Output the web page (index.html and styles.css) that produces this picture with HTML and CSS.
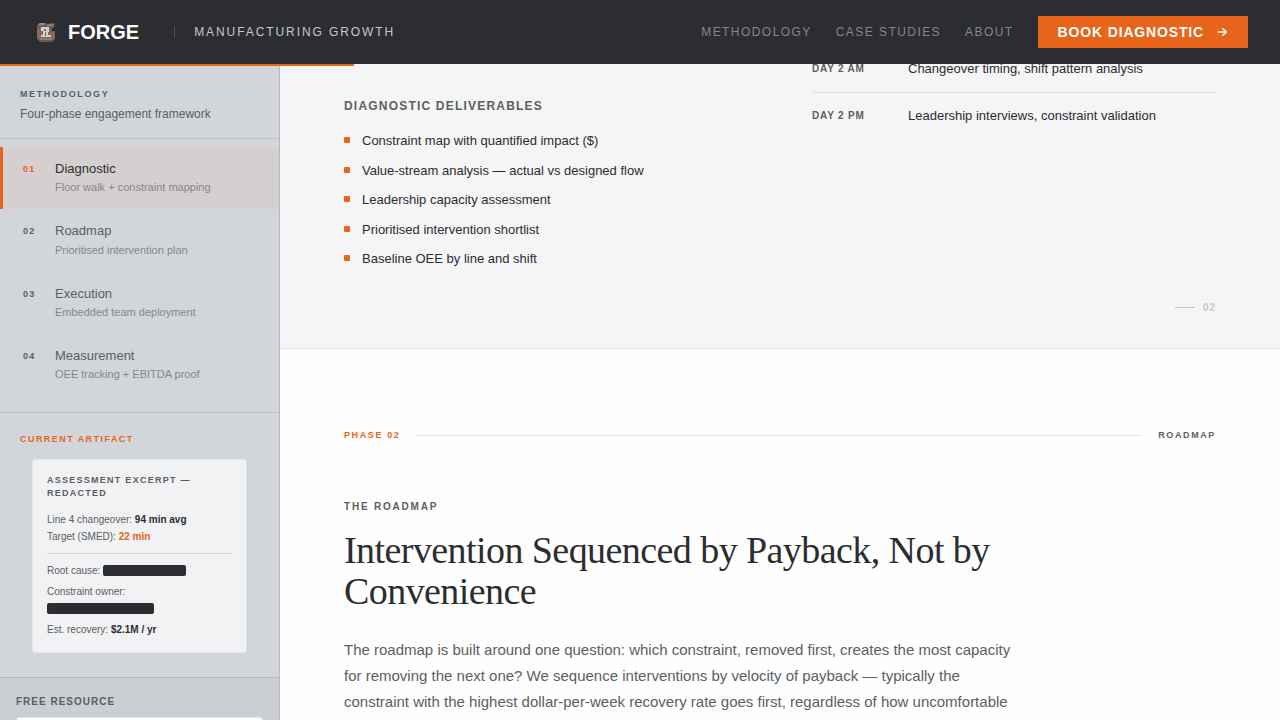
FILE: index.html
```html
<!DOCTYPE html>
<html lang="en">
<head>
  <meta charset="UTF-8" />
  <meta name="viewport" content="width=device-width, initial-scale=1.0" />
  <title>Forge | Manufacturing Growth</title>
  <link rel="stylesheet" href="styles.css">
</head>
<body>
  <header class="topbar">
    <a class="brand" href="#">
      <svg class="brand-logo" width="20" height="20" viewBox="0 0 20 20" aria-hidden="true">
        <path d="M3 1h5l3 1 8-1-1 5h-2v3h3v8l-3 3H4l-3-3V4z" fill="#6b5a54"/>
        <path d="M1 7h13v3h5v6H1z" fill="#86685d"/>
        <path d="M1 4 4 1h6l-2 2H4zM11 3l7-1-2 2h-5z" fill="#978c87"/>
        <path d="M2 16h16l-2 2H4z" fill="#857e7a"/>
        <path d="M5 5h8v5h-1v3h3v2H5v-2h2V9H5z" fill="#d6d0cc"/>
        <path d="M8 7h2v2H8zM9 10h1v4H9z" fill="#75645e"/>
      </svg>
      <span class="brand-name">FORGE</span>
    </a>
    <span class="brand-divider"></span>
    <span class="brand-tag">MANUFACTURING GROWTH</span>
    <nav class="topnav">
      <a href="#methodology">METHODOLOGY</a>
      <a href="#cases">CASE STUDIES</a>
      <a href="#about">ABOUT</a>
    </nav>
    <button class="btn-book" type="button">
      BOOK DIAGNOSTIC
      <svg width="12" height="12" viewBox="0 0 12 12" fill="none" stroke="currentColor" stroke-width="1.6" aria-hidden="true">
        <path d="M1.500 6h8.500M6.500 2.300 10.200 6 6.500 9.700"/>
      </svg>
    </button>
    <div class="progress"></div>
  </header>

  <div class="layout">
    <aside class="sidebar">
      <div class="side-head">
        <div class="side-label">METHODOLOGY</div>
        <div class="side-sub">Four-phase engagement framework</div>
      </div>

      <nav class="phases">
        <a class="phase active" href="#diagnostic">
          <span class="phase-num">01</span>
          <span class="phase-text"><span class="phase-title">Diagnostic</span><span class="phase-desc">Floor walk + constraint mapping</span></span>
        </a>
        <a class="phase" href="#roadmap">
          <span class="phase-num">02</span>
          <span class="phase-text"><span class="phase-title">Roadmap</span><span class="phase-desc">Prioritised intervention plan</span></span>
        </a>
        <a class="phase" href="#execution">
          <span class="phase-num">03</span>
          <span class="phase-text"><span class="phase-title">Execution</span><span class="phase-desc">Embedded team deployment</span></span>
        </a>
        <a class="phase" href="#measurement">
          <span class="phase-num">04</span>
          <span class="phase-text"><span class="phase-title">Measurement</span><span class="phase-desc">OEE tracking + EBITDA proof</span></span>
        </a>
      </nav>

      <div class="artifact">
        <div class="side-label orange">CURRENT ARTIFACT</div>
        <div class="artifact-card">
          <div class="artifact-title">ASSESSMENT EXCERPT — REDACTED</div>
          <p>Line 4 changeover: <strong>94 min avg</strong></p>
          <p>Target (SMED): <strong class="orange">22 min</strong></p>
          <hr>
          <p class="root-cause">Root cause: <span class="redacted"></span></p>
          <p>Constraint owner:</p>
          <div class="redacted redacted-line"></div>
          <p>Est. recovery: <strong>$2.1M / yr</strong></p>
        </div>
      </div>

      <div class="resource">
        <div class="resource-label">FREE RESOURCE</div>
        <div class="resource-card"></div>
      </div>
    </aside>

    <main class="content">
      <section class="section section-grey" id="diagnostic">
        <div class="columns">
          <div class="deliverables">
            <h3>DIAGNOSTIC DELIVERABLES</h3>
            <ul>
              <li>Constraint map with quantified impact ($)</li>
              <li>Value-stream analysis — actual vs designed flow</li>
              <li>Leadership capacity assessment</li>
              <li>Prioritised intervention shortlist</li>
              <li>Baseline OEE by line and shift</li>
            </ul>
          </div>
          <dl class="schedule">
            <div class="slot"><dt>DAY 2 AM</dt><dd>Changeover timing, shift pattern analysis</dd></div>
            <div class="slot"><dt>DAY 2 PM</dt><dd>Leadership interviews, constraint validation</dd></div>
          </dl>
        </div>
        <div class="page-num">02</div>
      </section>

      <section class="section" id="roadmap">
        <div class="phase-bar">
          <span class="orange">PHASE 02</span>
          <span class="rule"></span>
          <span>ROADMAP</span>
        </div>
        <div class="eyebrow">THE ROADMAP</div>
        <h2>Intervention Sequenced by Payback, Not by Convenience</h2>
        <p class="lead">The roadmap is built around one question: which constraint, removed first, creates the most capacity for removing the next one? We sequence interventions by velocity of payback — typically the constraint with the highest dollar-per-week recovery rate goes first, regardless of how uncomfortable</p>
      </section>
    </main>
  </div>
</body>
</html>
```
FILE: styles.css
```css
:root {
  --dark: #2b2d30;
  --orange: #e8641b;
  --grey: #5b5e62;
}

* {
  box-sizing: border-box;
  margin: 0;
  padding: 0;
}

body {
  display: flex;
  flex-direction: column;
  height: 100vh;
  overflow: hidden;
  background: #fefefe;
  color: var(--dark);
  font-family: "Liberation Sans", Arial, sans-serif;
}

a {
  color: inherit;
  text-decoration: none;
}

.orange {
  color: var(--orange);
}

/* Top bar */
.topbar {
  position: relative;
  z-index: 2;
  flex: none;
  display: flex;
  align-items: center;
  height: 64px;
  padding: 0 32px 0 36px;
  background: var(--dark);
}

.brand {
  display: flex;
  align-items: center;
  gap: 12px;
}

.brand-name {
  color: #fff;
  font-size: 20px;
  font-weight: bold;
}

.brand-divider {
  width: 1px;
  height: 12px;
  margin: 0 19px 0 35px;
  background: #505256;
}

.brand-tag {
  color: #c6c8ca;
  font-size: 12px;
  letter-spacing: 0.16em;
}

.topnav {
  display: flex;
  gap: 24px;
  margin-left: auto;
  color: #85878a;
  font-size: 12px;
  letter-spacing: 0.12em;
}

.btn-book {
  display: flex;
  align-items: center;
  gap: 12px;
  height: 32px;
  margin-left: 24px;
  padding: 0 20px;
  border: 0;
  background: var(--orange);
  color: #fff;
  font-family: inherit;
  font-size: 14px;
  font-weight: bold;
  letter-spacing: 0.06em;
  cursor: pointer;
}

.progress {
  position: absolute;
  top: 100%;
  left: 0;
  width: 27.66%;
  height: 2px;
  background: var(--orange);
}

.layout {
  flex: 1;
  min-height: 0;
  display: grid;
  grid-template-columns: 280px 1fr;
}

/* Sidebar */
.sidebar {
  overflow: hidden;
  background: #d2d6da;
  border-right: 1px solid #b5b9bd;
}

.side-head {
  padding: 24px 20px 15px;
  border-bottom: 1px solid #bcc0c4;
}

.side-label {
  color: var(--grey);
  font-size: 9px;
  line-height: 12px;
  font-weight: bold;
  letter-spacing: 0.18em;
}

.side-label.orange {
  color: var(--orange);
  letter-spacing: 0.16em;
}

.side-sub {
  margin-top: 5px;
  color: var(--grey);
  font-size: 12px;
  line-height: 18px;
}

.phases {
  padding: 8px 0 16px;
  border-bottom: 1px solid #bcc0c4;
}

.phase {
  display: flex;
  padding: 13px 20px;
  border-left: 3px solid transparent;
  color: var(--grey);
}

.phase.active {
  background: #d5cfcf;
  border-left-color: var(--orange);
}

.phase-num {
  width: 32px;
  font-size: 9px;
  line-height: 2;
  font-weight: bold;
  letter-spacing: 0.15em;
}

.phase-title {
  display: block;
  font-size: 13px;
  line-height: 1.4;
}

.phase-desc {
  display: block;
  color: #84878b;
  font-size: 11px;
  line-height: 1.65;
}

.phase.active .phase-num {
  color: var(--orange);
}

.phase.active .phase-title {
  color: var(--dark);
}

.artifact {
  padding: 20px 20px 24px;
  border-bottom: 1px solid #b5b9bd;
}

.artifact-card {
  margin: 14px 12px 0;
  padding: 14px;
  background: #f1f2f4;
  border: 1px solid #e2e4e6;
  border-radius: 3px;
  color: var(--grey);
  font-size: 10px;
  line-height: 17px;
}

.artifact-title {
  margin-bottom: 11px;
  font-size: 9px;
  line-height: 13px;
  font-weight: bold;
  letter-spacing: 0.14em;
}

.artifact-card strong {
  color: var(--dark);
}

.artifact-card strong.orange {
  color: var(--orange);
}

.artifact-card hr {
  margin: 8px 0;
  border: 0;
  border-top: 1px solid #d2d6da;
}

.root-cause {
  display: flex;
  align-items: center;
  gap: 3px;
  margin-bottom: 4px;
}

.redacted {
  width: 83px;
  height: 11px;
  background: var(--dark);
  border-radius: 2px;
}

.redacted-line {
  width: 107px;
  margin: 3px 0 7px;
}

.resource {
  height: 100%;
  padding: 16px;
  background: #cbced2;
}

.resource-label {
  color: var(--grey);
  font-size: 10px;
  line-height: 15px;
  font-weight: bold;
  letter-spacing: 0.1em;
}

.resource-card {
  height: 120px;
  margin-top: 8px;
  background: #fff;
  border: 1px solid #e2e4e6;
  border-radius: 3px;
}

/* Content */
.content {
  overflow: hidden;
}

.section {
  padding: 80px 64px 32px;
}

/* tucked under the top bar */
.section-grey {
  margin-top: -18px;
  padding-top: 0;
  background: #f5f5f5;
  border-bottom: 1px solid #dcdddf;
}

.columns {
  display: grid;
  grid-template-columns: 1fr 1fr;
  gap: 64px;
}

.deliverables {
  padding-top: 51px;
}

.deliverables h3 {
  margin-bottom: 16px;
  color: var(--grey);
  font-size: 12px;
  line-height: 18px;
  letter-spacing: 0.1em;
}

.deliverables ul {
  display: grid;
  gap: 10px;
  list-style: none;
}

.deliverables li {
  display: flex;
  gap: 12px;
  font-size: 13px;
  line-height: 1.5;
}

.deliverables li::before {
  content: "";
  width: 6px;
  height: 6px;
  margin-top: 6px;
  background: var(--orange);
  border-radius: 1px;
}

.slot {
  display: flex;
  padding: 13px 0;
  line-height: 20px;
  border-bottom: 1px solid #dfe0e2;
}

.slot:last-child {
  border-bottom: 0;
}

.slot dt {
  width: 96px;
  color: var(--grey);
  font-size: 10px;
  font-weight: bold;
  letter-spacing: 0.08em;
}

.slot dd {
  font-size: 13px;
}

.page-num {
  display: flex;
  justify-content: flex-end;
  align-items: center;
  gap: 8px;
  margin-top: 31px;
  color: #c4c6c8;
  font-size: 10px;
  line-height: 16px;
  font-weight: bold;
  letter-spacing: 0.1em;
}

.page-num::before {
  content: "";
  width: 20px;
  height: 1px;
  background: #c4c6c8;
}

.phase-bar {
  display: flex;
  align-items: center;
  gap: 16px;
  color: var(--grey);
  font-size: 9px;
  line-height: 13px;
  font-weight: bold;
  letter-spacing: 0.18em;
}

.rule {
  flex: 1;
  height: 1px;
  background: #e4e5e6;
}

.eyebrow {
  margin-top: 57px;
  color: var(--grey);
  font-size: 10px;
  line-height: 16px;
  font-weight: bold;
  letter-spacing: 0.18em;
}

h2 {
  max-width: 680px;
  margin-top: 15px;
  font-family: "Liberation Serif", "Times New Roman", serif;
  font-size: 38px;
  line-height: 41px;
  font-weight: normal;
  letter-spacing: -0.015em;
}

.lead {
  max-width: 680px;
  margin-top: 25px;
  color: var(--grey);
  font-size: 15px;
  line-height: 26px;
}
```
